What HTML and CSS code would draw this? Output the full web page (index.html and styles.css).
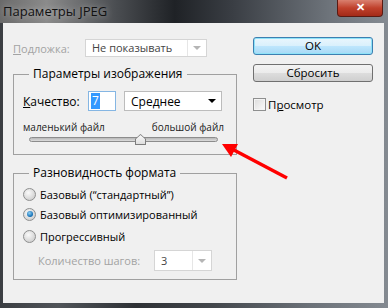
FILE: index.html
```html
<!DOCTYPE html>
<html lang="ru">
<head>
    <meta charset="UTF-8">
    <title>Параметры JPEG</title>
    <link rel="stylesheet" href="styles.css">
</head>
<body>
    <div class="window">
        <div class="titlebar">
            <span class="title">Параметры JPEG</span>
            <span class="close">✕</span>
        </div>
        <div class="client">
            <div class="left">
                <div class="row backdrop">
                    <span class="label disabled"><u>П</u>одложка:</span>
                    <div class="select disabled wide">
                        <span class="value">Не показывать</span>
                        <span class="arrow"></span>
                    </div>
                </div>

                <fieldset class="group first">
                    <legend>Параметры изображения</legend>
                    <div class="row quality">
                        <span class="label"><u>К</u>ачество:</span>
                        <div class="number"><span class="sel">7</span></div>
                        <div class="select mid">
                            <span class="value">Среднее</span>
                            <span class="arrow dark"></span>
                        </div>
                    </div>
                    <div class="sizes">
                        <span>маленький файл</span>
                        <span>большой файл</span>
                    </div>
                    <div class="slider">
                        <div class="track"></div>
                        <div class="thumb"></div>
                    </div>
                </fieldset>

                <fieldset class="group second">
                    <legend>Разновидность формата</legend>
                    <div class="radio"><span class="dot"></span>Базовый (“стандартный”)</div>
                    <div class="radio"><span class="dot on"></span>Базовый оптимизированный</div>
                    <div class="radio last"><span class="dot"></span>Прогрессивный</div>
                    <div class="row steps">
                        <span class="label disabled">Количество шагов:</span>
                        <div class="select disabled small">
                            <span class="value">3</span>
                            <span class="arrow"></span>
                        </div>
                    </div>
                </fieldset>
            </div>

            <div class="right">
                <div class="btn default">OK</div>
                <div class="btn">Сбросить</div>
                <div class="check"><span class="box"></span>П<u>р</u>осмотр</div>
            </div>
        </div>

        <svg class="pointer" width="388" height="308" viewBox="0 0 388 308">
            <line x1="287" y1="178" x2="232" y2="149" stroke="#ff0000" stroke-width="3.5"/>
            <polygon points="222,144 238,144 231,157" fill="#ff0000"/>
        </svg>
    </div>
</body>
</html>
```

FILE: styles.css
```css
body {
    margin: 0;
    font-family: "Open Sans", "Noto Sans", sans-serif;
    font-size: 11px;
    color: #000;
}
.window {
    position: relative;
    width: 388px;
    height: 308px;
    display: flex;
    flex-direction: column;
    background: linear-gradient(to right, #3b3e42 0%, #505459 15%, #2e3135 35%, #43474c 55%, #6c7279 80%, #848a91 100%);
    overflow: hidden;
}
.titlebar {
    position: relative;
    height: 23px;
    flex: none;
    background: linear-gradient(to right, #6a6a6a 0%, #8b8b8b 12%, #4a4d51 30%, #1f2226 45%, #3a3e44 60%, #6e747b 85%, #858b92 100%);
}
.title {
    display: block;
    padding: 3px 0 0 3px;
    font-size: 13px;
    line-height: 17px;
    color: #111;
    text-shadow: 0 0 6px rgba(255, 255, 255, 0.5);
}
.close {
    position: absolute;
    top: 0;
    right: 5px;
    width: 44px;
    height: 16px;
    border: 1px solid #5a1a12;
    border-top: none;
    border-radius: 0 0 4px 4px;
    background: linear-gradient(#d9806f, #c0412c 50%, #a32a18);
    color: #fff;
    font-size: 11px;
    font-weight: bold;
    text-align: center;
    line-height: 14px;
}
.client {
    flex: 1;
    margin: 0 4px 5px 3px;
    background: #f0f0f0;
    display: flex;
    padding-top: 14px;
}
.left {
    width: 224px;
    margin-left: 10px;
}
.right {
    width: 120px;
    margin-left: 16px;
}
.row {
    display: flex;
    align-items: center;
}
.label.disabled {
    color: #a3a3a3;
}
.backdrop {
    margin-top: 2px;
    height: 18px;
}
.backdrop .label {
    width: 72px;
}
.select {
    box-sizing: border-box;
    display: flex;
    align-items: center;
    background: #fff;
    border: 1px solid #bcbcbc;
    height: 20px;
    padding-left: 6px;
}
.select .value {
    flex: 1;
}
.select .arrow {
    width: 0;
    height: 0;
    border-left: 4px solid transparent;
    border-right: 4px solid transparent;
    border-top: 4px solid #b5b5b5;
    margin-right: 5px;
}
.select .arrow.dark {
    border-top-color: #000;
}
.select.disabled {
    border-color: #d5d5d5;
    color: #444;
}
.select.wide {
    width: 122px;
    height: 18px;
}
.select.wide .value,
.select.small .value {
    border-right: 1px solid #e6e6e6;
    height: 100%;
    line-height: 16px;
    margin-right: 5px;
}
.select.mid {
    width: 98px;
    margin-left: 8px;
}
.select.small {
    width: 58px;
    height: 21px;
}
.select.small .value {
    line-height: 19px;
}
.group {
    margin: 0;
    padding: 0 12px 8px 9px;
    border: 1px solid #a0a0a0;
    width: 224px;
    box-sizing: border-box;
}
.group legend {
    margin-left: 6px;
    padding: 0 4px;
    line-height: 16px;
    font-size: 12px;
}
.group.first {
    margin-top: 9px;
}
.group.second {
    margin-top: 10px;
}
.quality {
    margin-top: 9px;
    height: 20px;
}
.quality .label {
    width: 65px;
    font-size: 12px;
}
.number {
    box-sizing: border-box;
    width: 28px;
    height: 20px;
    background: #fff;
    border: 1px solid #85b6e3;
    padding: 1px 0 0 2px;
}
.number .sel {
    display: inline-block;
    background: #3399ff;
    color: #fff;
    font-size: 12px;
    line-height: 16px;
    padding: 0 1px;
}
.select.mid .value {
    font-size: 12px;
}
.sizes {
    display: flex;
    justify-content: space-between;
    font-size: 10px;
    line-height: 14px;
    margin-top: 9px;
    color: #222;
}
.slider {
    position: relative;
    height: 12px;
    width: 189px;
    margin-left: 6px;
}
.track {
    position: absolute;
    left: 0;
    right: 0;
    top: 3px;
    height: 3px;
    border: 1px solid #8c8c8c;
    border-radius: 3px;
    background: linear-gradient(#b8b8b8, #dcdcdc);
}
.thumb {
    position: absolute;
    left: 106px;
    top: 0;
    width: 11px;
    height: 11px;
    background: #7d7d7d;
    clip-path: polygon(50% 0, 100% 45%, 100% 100%, 0 100%, 0 45%);
}
.thumb::after {
    content: "";
    position: absolute;
    left: 1px;
    right: 1px;
    top: 1px;
    bottom: 1px;
    background: linear-gradient(#fbfbfb, #dedede);
    clip-path: polygon(50% 0, 100% 45%, 100% 100%, 0 100%, 0 45%);
}
.radio {
    display: flex;
    align-items: center;
    height: 20px;
    font-size: 11px;
}
.radio:first-of-type {
    margin-top: 3px;
}
.radio.last {
    margin-top: 2px;
}
.dot {
    box-sizing: border-box;
    width: 13px;
    height: 13px;
    border-radius: 50%;
    border: 1px solid #8e8f8f;
    background: radial-gradient(circle at 40% 35%, #fafafa, #d4d4d4 70%);
    margin-right: 4px;
    position: relative;
}
.dot.on::after {
    content: "";
    position: absolute;
    left: 2.5px;
    top: 2.5px;
    width: 6px;
    height: 6px;
    border-radius: 50%;
    background: radial-gradient(circle at 40% 35%, #8fd0f5, #0e6bb2 70%);
}
.steps {
    margin-top: 4px;
    height: 21px;
}
.steps .label {
    margin-left: 15px;
    width: 116px;
}
.btn {
    box-sizing: border-box;
    height: 18px;
    border: 1px solid #707070;
    border-radius: 3px;
    background: linear-gradient(#f3f3f3 0%, #ebebeb 50%, #dddddd 51%, #cfcfcf 100%);
    text-align: center;
    line-height: 16px;
    font-size: 11.5px;
}
.btn.default {
    border-color: #3c7fb1;
    background: linear-gradient(#eaf6fd 0%, #d9f0fc 50%, #bee6fd 51%, #a7d9f5 100%);
    box-shadow: inset 0 0 0 1px #8fe3f8;
}
.btn + .btn {
    margin-top: 9px;
}
.check {
    display: flex;
    align-items: center;
    margin-top: 15px;
    height: 14px;
    font-size: 11.5px;
}
.box {
    box-sizing: border-box;
    width: 13px;
    height: 13px;
    border: 1px solid #8e8f8f;
    background: linear-gradient(135deg, #dcdcdc, #fbfbfb);
    box-shadow: inset 0 0 0 1px #f4f4f4;
    margin-right: 2px;
}
.pointer {
    position: absolute;
    left: 0;
    top: 0;
}
```
